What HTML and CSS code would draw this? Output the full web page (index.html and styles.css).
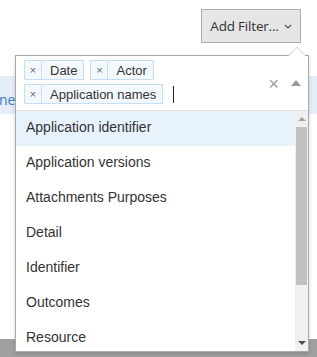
FILE: index.html
```html
<!DOCTYPE html>
<html>
<head>
<meta charset="utf-8">
<link rel="stylesheet" href="styles.css">
</head>
<body>
<div class="page">
  <div class="toolbar">
    <button class="add-filter"><span class="btn-label">Add Filter...</span><svg class="chev" width="8" height="5" viewBox="0 0 8 5"><path d="M1 1 L4 4 L7 1" fill="none" stroke="#555" stroke-width="1.2"/></svg></button>
  </div>
  <div class="spacer1"></div>
  <div class="row-blue"><span class="row-text">ne</span></div>
  <div class="spacer2"></div>
  <div class="footer-bar"></div>

  <div class="dropdown">
    <div class="caret-tip"></div>
    <div class="selection">
      <div class="tags">
        <span class="tag"><span class="tag-x">×</span><span class="tag-label">Date</span></span>
        <span class="tag"><span class="tag-x">×</span><span class="tag-label">Actor</span></span>
        <span class="tag"><span class="tag-x">×</span><span class="tag-label">Application names</span></span>
        <span class="cursor"></span>
      </div>
      <div class="controls">
        <span class="clear">×</span>
        <svg class="up" width="10" height="6" viewBox="0 0 10 6"><path d="M0 6 L5 0 L10 6 Z" fill="#999"/></svg>
      </div>
    </div>
    <div class="list-wrap">
      <ul class="options">
        <li class="active">Application identifier</li>
        <li>Application versions</li>
        <li>Attachments Purposes</li>
        <li>Detail</li>
        <li>Identifier</li>
        <li>Outcomes</li>
        <li>Resource</li>
      </ul>
      <div class="scrollbar">
        <div class="sb-btn"><svg width="8" height="4" viewBox="0 0 8 4"><path d="M0 4 L4 0 L8 4 Z" fill="#a3a3a3"/></svg></div>
        <div class="sb-track"><div class="sb-thumb"></div></div>
        <div class="sb-btn"><svg width="8" height="4" viewBox="0 0 8 4"><path d="M0 0 L4 4 L8 0 Z" fill="#505050"/></svg></div>
      </div>
    </div>
  </div>
</div>
</body>
</html>
```

FILE: styles.css
```css
* { box-sizing: border-box; }
html, body { margin: 0; padding: 0; background: #fff; }
body { font-family: "Liberation Sans", Arial, sans-serif; color: #333; }
.page { position: relative; width: 317px; height: 357px; overflow: hidden; display: flex; flex-direction: column; }
.toolbar { height: 52px; display: flex; justify-content: flex-end; align-items: flex-start; padding: 9px 16px 0 0; }
.add-filter {
  width: 100px; height: 34px; background: #e6e6e6; border: 1px solid #adadad; border-radius: 0;
  font-family: "Open Sans", sans-serif; font-size: 13.5px; color: #333; padding: 0 0 0 0;
  display: flex; align-items: center; justify-content: center; gap: 5px; white-space: nowrap;
}
.btn-label { letter-spacing: -0.2px; }
.chev { margin-top: 1px; }
.spacer1 { height: 24px; }
.row-blue { height: 38px; background: #e4edf8; display: flex; align-items: center; padding-top: 8px; }
.row-text { font-family: "Open Sans", sans-serif; font-size: 14px; color: #3d7cc9; margin-left: -1px; }
.spacer2 { flex: 1; }
.footer-bar { height: 18px; background: #a0a0a0; }

.dropdown {
  position: absolute; left: 15px; top: 55px; width: 294px; height: 297px;
  background: #fff; border: 1px solid #aaa; box-shadow: 0 2px 4px rgba(0,0,0,0.15);
  display: flex; flex-direction: column;
}
.caret-tip {
  position: absolute; top: -7px; right: 5px; width: 12px; height: 12px;
  background: #fff; border-left: 1px solid #ddd; border-top: 1px solid #ddd; transform: rotate(45deg);
}
.selection { position: relative; height: 55px; display: flex; border-bottom: 1px solid #ddd; padding: 4px 0 0 8px; }
.tags { display: flex; flex-wrap: wrap; align-content: flex-start; gap: 4px 6px; width: 240px; }
.tag {
  display: inline-flex; height: 20px; border: 1px solid #c7dff5; background: #f3f8fd;
  font-size: 13px; color: #333; align-items: stretch;
}
.tag-x { width: 17px; border-right: 1px solid #c7dff5; display: flex; align-items: center; justify-content: center; font-size: 11px; color: #666; }
.tag-label { padding: 0 6px 0 8px; display: flex; align-items: center; line-height: 1; }
.cursor { width: 1px; height: 17px; background: #222; margin: 2px 0 0 4px; }
.controls { position: absolute; right: 7px; top: 19px; display: flex; align-items: center; gap: 12px; }
.clear { font-size: 18px; color: #999; line-height: 1; }
.up { margin-top: -2px; }
.list-wrap { flex: 1; display: flex; min-height: 0; }
.options { list-style: none; margin: 0; padding: 0; flex: 1; overflow: hidden; }
.options li { height: 35px; display: flex; align-items: center; padding: 0 0 3px 10px; font-size: 14px; color: #333; }
.options li.active { background: #e8f2fd; }
.scrollbar { width: 13px; background: #f0f0f0; display: flex; flex-direction: column; }
.sb-btn { height: 16px; display: flex; align-items: center; justify-content: center; }
.sb-track { flex: 1; }
.sb-thumb { margin: 0 1px; height: 158px; background: #c1c1c1; }
```
